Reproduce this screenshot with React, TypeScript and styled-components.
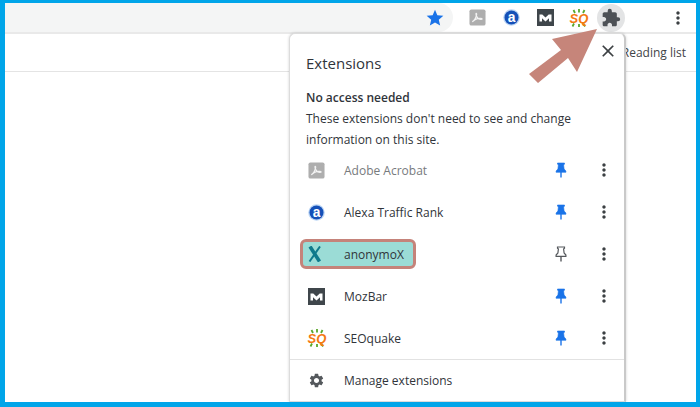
import React from "react";
import styled, { createGlobalStyle } from "styled-components";
import { MdExtension, MdSettings, MdStar, MdClose, MdMoreVert } from "react-icons/md";

const Global = createGlobalStyle`
  html, body { margin: 0; padding: 0; background: #fff; }
  * { box-sizing: border-box; }
`;

const Frame = styled.div`
  position: relative;
  width: 700px;
  height: 407px;
  overflow: hidden;
  background: #fff;
  border-style: solid;
  border-color: #00a5e9;
  border-width: 3px 4px 5px 5px;
  font-family: "Open Sans", "Noto Sans", sans-serif;
  color: #30343a;
`;

const Toolbar = styled.div`
  height: 31px;
  display: flex;
  align-items: center;
  border-bottom: 2px solid #e9e9e9;
`;

const Omnibox = styled.div`
  width: 448px;
  height: 29px;
  margin-right: 7px;
  background: #f4f5f5;
  border-radius: 0 15px 15px 0;
  display: flex;
  align-items: center;
  justify-content: flex-end;
  padding-right: 8px;
  color: #1a73e8;
  font-size: 20px;
`;

const ActionSlot = styled.div`
  width: 34px;
  height: 29px;
  display: flex;
  align-items: center;
  justify-content: center;
`;

const PuzzleButton = styled.div`
  width: 28px;
  height: 28px;
  margin-left: 1px;
  border-radius: 50%;
  background: #e3e4e5;
  color: #4d5156;
  font-size: 20px;
  display: flex;
  align-items: center;
  justify-content: center;
`;

const MenuButton = styled.div`
  margin-left: 43px;
  color: #3c4043;
  font-size: 20px;
  display: flex;
  align-items: center;
`;

const BookmarkBar = styled.div`
  height: 38px;
  border-bottom: 1px solid #e4e4e4;
  display: flex;
  align-items: center;
  justify-content: flex-end;
  padding: 0 10px 0 0;
  font-size: 12px;
  color: #3f4448;
`;

const Panel = styled.div`
  position: absolute;
  left: 284px;
  top: 30px;
  width: 337px;
  height: 369px;
  background: #fff;
  border-radius: 6px 6px 0 0;
  border: 1px solid #dcdcdc;
  border-right: 2px solid #c9c9c9;
  box-shadow: 0 0 3px rgba(0, 0, 0, 0.18);
  display: flex;
  flex-direction: column;
`;

const PanelHeader = styled.div`
  height: 53px;
  padding: 19px 6px 0 16px;
  display: flex;
  justify-content: space-between;
`;

const Title = styled.div`
  font-size: 15px;
  line-height: 21px;
  color: #30343a;
`;

const CloseButton = styled.div`
  color: #3c4043;
  font-size: 20px;
  margin-top: -13px;
`;

const Notice = styled.div`
  padding: 0 16px;
  font-size: 12px;
  line-height: 21px;
  height: 62px;
  color: #30343a;
`;

const NoticeTitle = styled.div`
  font-weight: 600;
`;

const List = styled.div`
  display: flex;
  flex-direction: column;
  border-bottom: 1px solid #e2e2e2;
  height: 211px;
`;

const Row = styled.div`
  height: 42px;
  display: flex;
  align-items: center;
  padding-left: 10px;
  flex: none;
`;

const Chip = styled.div<{ $on?: boolean }>`
  width: 116px;
  height: 30px;
  display: flex;
  align-items: center;
  border-radius: 6px;
  border: 3px solid ${(p) => (p.$on ? "#c5837a" : "transparent")};
  background: ${(p) => (p.$on ? "#9bdcd6" : "transparent")};
  white-space: nowrap;
`;

const IconSlot = styled.div`
  width: 41px;
  padding-left: 5px;
  display: flex;
  align-items: center;
  flex: none;
`;

const Name = styled.span<{ $muted?: boolean }>`
  font-size: 12px;
  color: ${(p) => (p.$muted ? "#777a7d" : "#30343a")};
`;

const PinSlot = styled.div`
  margin-left: 139px;
  width: 12px;
  display: flex;
  justify-content: center;
  flex: none;
`;

const DotsSlot = styled.div`
  margin-left: 27px;
  color: #3c4043;
  font-size: 20px;
  display: flex;
  flex: none;
`;

const Footer = styled.div`
  flex: 1;
  display: flex;
  align-items: center;
  padding-left: 18px;
  font-size: 12px;
  color: #30343a;
`;

const GearSlot = styled.div`
  width: 36px;
  font-size: 17px;
  color: #54585c;
  display: flex;
  align-items: center;
`;

const Arrow = styled.svg`
  position: absolute;
  left: 520px;
  top: 22px;
  width: 90px;
  height: 70px;
`;

const Pin = ({ on }: { on: boolean }) => (
  <svg width="12" height="16" viewBox="0 0 12 16">
    <path
      d="M2.5 1h7v1.2L8.6 3l.5 4 1.8 2v1.3H1.100V9l1.800-2 .5-4-.9-.8z"
      fill={on ? "#1a73e8" : "none"}
      stroke={on ? "#1a73e8" : "#55585c"}
      strokeWidth={on ? 0.6 : 1.2}
    />
    <path d="M6 10v5.500" stroke={on ? "#1a73e8" : "#55585c"} strokeWidth="1.400" />
  </svg>
);

const Adobe = () => (
  <svg width="17" height="17" viewBox="0 0 18 18">
    <rect x="0.500" y="0.500" width="17" height="17" rx="2" fill="#aeaeae" />
    <path
      d="M3.500 13.500c1.800-1 3.500-3.500 4.500-7 .3-1.500-.3-2.500-.6-1.500-.2 2 1.800 5 3 5.500 1.300.6 3.500.5 3.500 0 0-.7-3-.8-5-.3-2.200.5-4.600 2.600-5.400 3.300z"
      fill="none"
      stroke="#f2f2f2"
      strokeWidth="1.300"
    />
  </svg>
);

const AlexaText = styled.text`
  font-family: "Liberation Sans", sans-serif;
  font-weight: 700;
  font-size: 13px;
  fill: #fff;
`;

const Alexa = () => (
  <svg width="17" height="17" viewBox="0 0 16 16">
    <circle cx="8" cy="8" r="7.800" fill="#bcd6f5" />
    <circle cx="8" cy="8" r="6.600" fill="#1450b8" />
    <AlexaText x="8" y="12.300" textAnchor="middle">a</AlexaText>
  </svg>
);

const Moz = () => (
  <svg width="17" height="17" viewBox="0 0 17 17">
    <rect width="17" height="17" fill="#3f464b" />
    <path d="M2.500 12.500V5.500h2.800l3.200 3 3.200-3h2.800v7h-2.500V9.200l-3.500 3.300L5 9.200v3.300z" fill="#fff" />
  </svg>
);

const SeoText = styled.text`
  font-family: "Liberation Sans", sans-serif;
  font-weight: 700;
  font-style: italic;
  font-size: 13px;
  fill: #f47a12;
`;

const Seo = () => (
  <svg width="18" height="18" viewBox="0 0 18 18" overflow="visible">
    <path
      d="M5 4L3.500 1M9 3.500V0M13 4l1.500-3M4 14.500l-1.500 3M9 15v3M13.500 14.500l1.500 3"
      stroke="#5aa82c"
      strokeWidth="1.800"
    />
    <SeoText x="9" y="13.500" textAnchor="middle">SQ</SeoText>
  </svg>
);

const AnonX = () => (
  <svg width="14" height="16" viewBox="0 0 14 16">
    <path d="M2 .5L11.500 15.500" stroke="#0e7a8c" strokeWidth="3.600" fill="none" />
    <path d="M12 .5L1.500 15.500" stroke="#0e7a8c" strokeWidth="2" fill="none" />
  </svg>
);

const extensions = [
  { name: "Adobe Acrobat", icon: <Adobe />, pinned: true, muted: true },
  { name: "Alexa Traffic Rank", icon: <Alexa />, pinned: true },
  { name: "anonymoX", icon: <AnonX />, pinned: false, on: true },
  { name: "MozBar", icon: <Moz />, pinned: true },
  { name: "SEOquake", icon: <Seo />, pinned: true },
];

export default function App() {
  return (
    <Frame>
      <Global />
      <Toolbar>
        <Omnibox><MdStar /></Omnibox>
        <ActionSlot><Adobe /></ActionSlot>
        <ActionSlot><Alexa /></ActionSlot>
        <ActionSlot><Moz /></ActionSlot>
        <ActionSlot><Seo /></ActionSlot>
        <PuzzleButton><MdExtension /></PuzzleButton>
        <MenuButton><MdMoreVert /></MenuButton>
      </Toolbar>
      <BookmarkBar>Reading list</BookmarkBar>
      <Panel>
        <PanelHeader>
          <Title>Extensions</Title>
          <CloseButton><MdClose /></CloseButton>
        </PanelHeader>
        <Notice>
          <NoticeTitle>No access needed</NoticeTitle>
          These extensions don't need to see and change
          <br />
          information on this site.
        </Notice>
        <List>
          {extensions.map((e) => (
            <Row key={e.name}>
              <Chip $on={e.on}>
                <IconSlot>{e.icon}</IconSlot>
                <Name $muted={e.muted}>{e.name}</Name>
              </Chip>
              <PinSlot><Pin on={e.pinned} /></PinSlot>
              <DotsSlot><MdMoreVert /></DotsSlot>
            </Row>
          ))}
        </List>
        <Footer>
          <GearSlot><MdSettings /></GearSlot>
          Manage extensions
        </Footer>
      </Panel>
      <Arrow viewBox="0 0 90 70">
        <polygon points="72,4 52,47 43,33 13,58 4,49 36,25 27,14" fill="#c6857a" />
      </Arrow>
    </Frame>
  );
}
